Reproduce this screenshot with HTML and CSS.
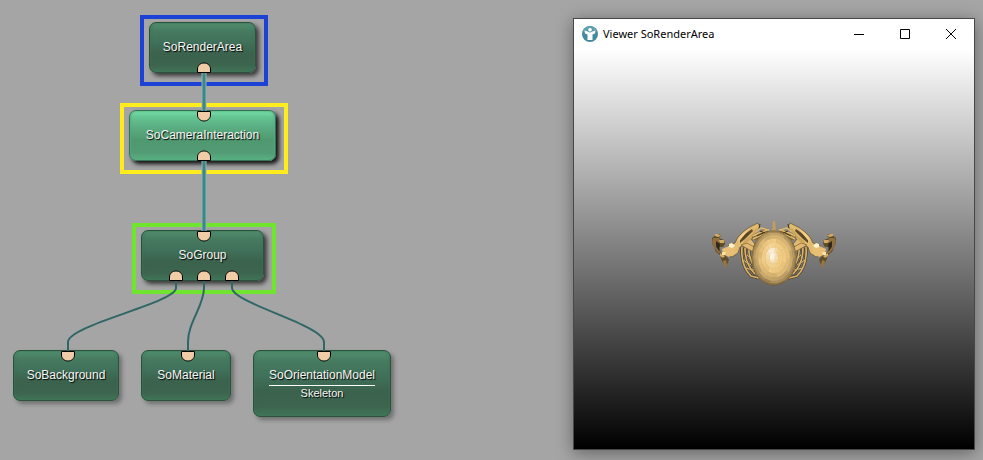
FILE: index.html
```html
<!DOCTYPE html>
<html lang="en">
<head>
<meta charset="utf-8">
<meta name="viewport" content="width=device-width, initial-scale=1">
<title>Viewer SoRenderArea</title>
<link rel="stylesheet" href="styles.css">
</head>
<body>
<main class="workspace">
  <section class="network" aria-label="Module network">
    <div class="group group-view"></div>
    <div class="group group-camera"></div>
    <div class="group group-scene"></div>

    <div class="node node-render">SoRenderArea</div>
    <div class="node node-camera">SoCameraInteraction</div>
    <div class="node node-group">SoGroup</div>
    <div class="node node-background">SoBackground</div>
    <div class="node node-material">SoMaterial</div>
    <div class="node node-model"><span class="node-type">SoOrientationModel</span><span class="node-instance">Skeleton</span></div>

    <svg class="wires" width="420" height="440" viewBox="0 0 420 440" aria-hidden="true">
      <defs>
        <path id="out" d="M-6.5 0V-3.5C-6.5-7-3.5-9.500 0-9.500S6.500-7 6.500-3.500V0Z"/>
        <path id="in" d="M-6.5 0V3.5C-6.5 7-3.5 9.500 0 9.500S6.500 7 6.500 3.500V0Z"/>
      </defs>
      <g class="wire-halo"><path d="M204 73V112M204 161V232"/></g>
      <g class="wire-main"><path d="M204 73V112M204 161V232"/></g>
      <g class="wire">
        <path d="M176 281V288C176 303 68 325 68 342V352"/>
        <path d="M204 281V288C204 306 188 322 188 342V352"/>
        <path d="M232 281V288C232 303 324 325 324 342V352"/>
      </g>
      <g class="port">
        <use href="#out" x="204" y="72.500"/>
        <use href="#in" x="204" y="111.500"/>
        <use href="#out" x="204" y="160.500"/>
        <use href="#in" x="204" y="231.500"/>
        <use href="#out" x="176" y="280.500"/>
        <use href="#out" x="204" y="280.500"/>
        <use href="#out" x="232" y="280.500"/>
        <use href="#in" x="68" y="351.500"/>
        <use href="#in" x="188" y="351.500"/>
        <use href="#in" x="324" y="351.500"/>
      </g>
    </svg>
  </section>

  <section class="viewer" aria-label="Viewer SoRenderArea">
    <header class="titlebar">
      <svg class="logo" width="16" height="16" viewBox="0 0 16 16" aria-hidden="true">
        <circle cx="8" cy="8" r="8" fill="#438a9e"/>
        <path d="M1 6A7.200 7.200 0 0 1 15 6Q8 2 1 6Z" fill="#63a5b5"/>
        <path d="M2.500 4.500L6 5.500H10L13.500 4.500L13 7.500L10.500 8.500V14H5.500V8.500L3 7.500Z" fill="#fff"/>
        <circle cx="8" cy="3.800" r="2.300" fill="#fff" stroke="#438a9e" stroke-width=".8"/>
      </svg>
      <h1 class="title">Viewer SoRenderArea</h1>
      <button class="control" type="button" aria-label="Minimize"><svg width="10" height="10" viewBox="0 0 10 10"><path d="M0 5.500H10"/></svg></button>
      <button class="control" type="button" aria-label="Maximize"><svg width="10" height="10" viewBox="0 0 10 10"><path d="M.5.5H9.500V9.500H.5Z"/></svg></button>
      <button class="control" type="button" aria-label="Close"><svg width="10" height="10" viewBox="0 0 10 10"><path d="M0 0L10 10M10 0L0 10"/></svg></button>
    </header>
    <div class="scene">
      <svg class="model" width="130" height="70" viewBox="0 0 130 70" role="img" aria-label="Skeleton seen from above">
        <defs>
          <g id="side">
            <g fill="none" stroke="#4a3b20" stroke-width="3">
              <path d="M33 29C32 41 35 51 42 58L50 60M36 30C36 42 40 50 46 56M40 27C39 38 42 46 49 53"/>
            </g>
            <g fill="none" stroke="#d9b26a" stroke-width="1.700">
              <path d="M33 29C32 41 35 51 42 58L50 60M36 30C36 42 40 50 46 56M40 27C39 38 42 46 49 53"/>
              <path d="M34 42L42 47M36 50L45 52M38 37L45 43" stroke-width="1"/>
            </g>
            <path d="M49 5L41 9L34 14L29 19L26 25L20 27L16 31L18 37L23 39L29 35L31 29L37 27L43 31L46 26L41 20L47 14L51 9Z" fill="#e2bb73" stroke="#55431f" stroke-width=".6"/>
            <path d="M43 11L36 16L31 22L31 25L36 21L41 16L44 13Z" fill="#5b4826"/>
            <path d="M48 9L41 18L35 23L33 27L40 23L47 15Z" fill="#cda55d"/>
            <path d="M40 10L33 16L28 23L31 22L37 15Z" fill="#f3cf89"/>
            <path d="M32 27L38 25L47 30L52 34L48 36L37 30Z" fill="#e2b96f" stroke="#655029" stroke-width=".6"/>
            <path d="M44 17L58 10L60 14L48 23L43 21Z" fill="#806537"/>
            <path d="M44 18L50 15L58 12M44 21L50 18L58 15M47 14L52 10L60 12M49 22L55 17" fill="none" stroke="#deb970" stroke-width="1.400"/>
            <path d="M51 13L56 15M48 18L54 15M50 10L51 6" fill="none" stroke="#3f321a" stroke-width="1"/>
            <path d="M3 20L7 17L6 16L10 16L12 18L10 20L15 22L16 26L14 29L10 29L12 35L18 39L20 42L17 49L13 43L11 37L7 34L5 29L3 25Z" fill="#614c28"/>
            <path d="M4 20L10 20L12 24L8 25L7 29L12 35L9 35L5 29L3 24Z" fill="#907040"/>
            <path d="M6 16L9 16L12 18L9 19L6 18ZM10 22L15 22L15 25L11 25ZM11 35L16 38L14 40L11 38Z" fill="#d2aa62"/>
            <path d="M7 23L11 26L10 33L7 28Z" fill="#302819"/>
            <path d="M14 43L17 42L18 47L17 50L15 48Z" fill="#987643"/>
            <path d="M13 31L20 28L26 29L26 35L20 39L14 36Z" fill="#e8bf75"/>
            <path d="M20 26L23 25L26 28L23 30L20 29Z" fill="#fff2ce"/>
            <path d="M13 34L17 34L16 37L13 37Z" fill="#fbe1a5"/>
          </g>
        </defs>
        <path d="M64 3H66L67 15H63Z" fill="#c69e58"/>
        <use href="#side"/>
        <use href="#side" transform="translate(130 0) scale(-1 1)"/>
        <ellipse cx="65" cy="40" rx="22" ry="27" fill="#b08a4b" stroke="#74592d"/>
        <g id="cranium"></g>
      </svg>
    </div>
  </section>
</main>
<script src="model.js"></script>
</body>
</html>
```
FILE: styles.css
```css
* { box-sizing: border-box; }

body {
  margin: 0;
  background: #a5a5a5;
  font-family: "Liberation Sans", Arial, sans-serif;
}

.workspace {
  display: grid;
  grid-template-columns: minmax(420px, 573fr) minmax(300px, 402fr);
  min-height: 100vh;
  padding: 18px 8px 10px 0;
}

/* Free canvas: node positions are in canvas coordinates. */
.network {
  position: relative;
  margin-top: -18px;
}

.group {
  position: absolute;
  height: 71px;
  border: 4px solid;
}

.group-view { left: 140px; top: 15px; width: 128px; border-color: #1b41d5; }
.group-camera { left: 120px; top: 103px; width: 168px; border-color: #ffec1c; }
.group-scene { left: 132px; top: 223px; width: 144px; border-color: #70e52d; }

.node {
  position: absolute;
  display: flex;
  flex-direction: column;
  align-items: center;
  height: 51px;
  padding-top: 16px;
  border: 1px solid #2c523e;
  border-radius: 7px;
  background: linear-gradient(#528f6f 0, #467b60 16%, #40705a 40%, #3b624c 62%, #3c644e 85%, #427559 100%);
  box-shadow: inset 0 0 2px 1px rgba(58, 118, 86, .6), 3px 3px 4px rgba(0, 0, 0, .32);
  color: #f4f7f5;
  font-size: 12px;
  line-height: 16px;
  text-shadow: 1px 1px 1px #000;
  white-space: nowrap;
}

.node-render { left: 149px; top: 22px; width: 107px; box-shadow: inset 0 0 2px 1px rgba(58, 118, 86, .6), 3px 3px 4px rgba(0, 0, 0, .65); }
.node-group { left: 141px; top: 230px; width: 123px; box-shadow: inset 0 0 2px 1px rgba(58, 118, 86, .6), 3px 3px 4px rgba(0, 0, 0, .65); }
.node-background { left: 13px; top: 350px; width: 106px; }
.node-material { left: 141px; top: 350px; width: 90px; }
.node-model { left: 253px; top: 350px; width: 138px; height: 67px; }

.node-camera {
  left: 129px;
  top: 110px;
  width: 147px;
  border-color: #357457;
  background: linear-gradient(#78e3ab 0, #65c592 12%, #5bae83 32%, #509870 60%, #529b74 85%, #5bb184 100%);
  box-shadow: inset 0 0 2px 1px rgba(83, 174, 126, .7), 3px 3px 4px rgba(0, 0, 0, .9);
}

.node-type { border-bottom: 1px solid #fff; padding-bottom: 2px; }
.node-instance { font-size: 11px; line-height: 14px; }

.wires { position: absolute; left: 0; top: 0; fill: none; }
.wire-halo { stroke: #8fb5b2; stroke-width: 5px; }
.wire-main { stroke: #3d8685; stroke-width: 3px; }
.wire { stroke: #306666; stroke-width: 2px; }
.port { fill: #f0cda6; stroke: #000; stroke-width: 1px; }

.viewer {
  display: flex;
  flex-direction: column;
  border: 1px solid #484848;
  background: #fff;
  box-shadow: 0 3px 16px rgba(0, 0, 0, .4);
}

.titlebar {
  display: flex;
  align-items: center;
  height: 30px;
  padding-left: 8px;
}

.title {
  flex: 1;
  margin: 0 0 0 5px;
  color: #000;
  font: 400 11px/16px "Noto Sans", "Open Sans", sans-serif;
  white-space: nowrap;
}

.control {
  display: grid;
  place-items: center;
  width: 46px;
  height: 30px;
  padding: 0;
  border: 0;
  background: transparent;
}

.control svg { fill: none; stroke: #000; stroke-width: 1px; }

.scene {
  flex: 1;
  display: grid;
  place-items: center;
  background: linear-gradient(#fff, #000);
}

.model { display: block; margin-top: 8px; }
```
FILE: model.js
```js
// Builds the faceted cranium, shaded by a light in front of the model.
const NS = 'http://www.w3.org/2000/svg';
const target = document.getElementById('cranium');
const rings = [0, 0.2, 0.4, 0.58, 0.74, 0.87, 0.96, 1];
const segments = 18;

function point(r, a) {
  return [65 + Math.cos(a) * r * 22, 40 + Math.sin(a) * r * 27];
}

for (let i = 0; i < rings.length - 1; i++) {
  for (let j = 0; j < segments; j++) {
    const a = j / segments * Math.PI * 2;
    const b = a + Math.PI * 2 / segments;
    const mid = (rings[i] + rings[i + 1]) / 2;
    const nx = Math.cos((a + b) / 2) * mid;
    const ny = Math.sin((a + b) / 2) * mid;
    const nz = Math.sqrt(1 - mid * mid);
    const jitter = ((i * 7 + j * 11) % 5 - 2) * 0.015;
    const light = Math.min(1, 0.5 + nz * 0.58 - ny * 0.06 + jitter);
    const glow = Math.exp(-((nx + 0.08) ** 2 / 0.04 + (ny + 0.12) ** 2 / 0.08));
    const rgb = [241, 203, 130].map(c => Math.round(c * light + (255 - c * light) * glow));
    const face = document.createElementNS(NS, 'polygon');
    const corners = [point(rings[i], a), point(rings[i + 1], a), point(rings[i + 1], b), point(rings[i], b)];
    face.setAttribute('points', corners.map(p => p.map(n => n.toFixed(1)).join()).join(' '));
    face.setAttribute('fill', `rgb(${rgb})`);
    face.setAttribute('stroke', `rgb(${rgb})`);
    face.setAttribute('stroke-width', '0.4');
    target.appendChild(face);
  }
}
```
